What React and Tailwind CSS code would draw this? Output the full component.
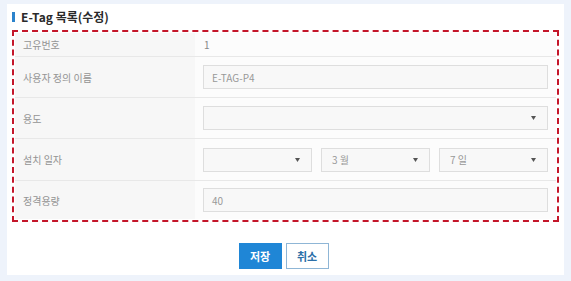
const font = { fontFamily: '"Noto Sans CJK KR", "Noto Sans", sans-serif' };

function Caret() {
  return (
    <svg width="5" height="4" viewBox="0 0 5 4">
      <path d="M0 0 L5 0 L2.5 4 Z" fill="#555" />
    </svg>
  );
}

function Select({ value, className }) {
  return (
    <div className={`h-[24px] border border-[#dedede] bg-[#f8f8f8] flex items-center justify-between pl-[10px] pr-[11px] ${className}`}>
      <span className="text-[10px] text-[#999]">{value}</span>
      <Caret />
    </div>
  );
}

function Row({ label, children, height = "h-[41px]", last }) {
  return (
    <div className={`flex ${height} ${last ? "" : "border-b border-[#e8e8e8]"}`}>
      <div className="w-[180px] bg-[#f7f7f7] flex items-center pl-[8px] text-[10px] text-[#949494]">{label}</div>
      <div className="flex-1 bg-[#fcfcfc] flex items-center pl-[8px] pr-[8px]">{children}</div>
    </div>
  );
}

export default function App() {
  return (
    <div className="w-[571px] h-[281px] bg-[#eef3fb] pt-[4px] pl-[7px]" style={font}>
      <div className="w-[557px] h-[271px] bg-white flex flex-col">
        <div className="h-[26px] flex items-center pl-[5px] pb-[1px]">
          <div className="w-[3px] h-[10px] bg-[#2b83cc]" />
          <span className="ml-[6px] text-[12px] font-bold text-[#2a2a2a]">E-Tag 목록(수정)</span>
        </div>
        <div className="ml-[5px] w-[547px] border-2 border-dashed border-[#c4162a] p-px">
          <Row label="고유번호" height="h-[24px]">
            <span className="text-[10px] text-[#888] pl-[1px]">1</span>
          </Row>
          <Row label="사용자 정의 이름">
            <div className="w-full h-[24px] border border-[#dedede] bg-[#f8f8f8] flex items-center pl-[8px] text-[10px] text-[#999]">E-TAG-P4</div>
          </Row>
          <Row label="용도">
            <Select value="" className="w-full" />
          </Row>
          <Row label="설치 일자" height="h-[42px]">
            <div className="w-full flex gap-[9px]">
              <Select value="" className="flex-1" />
              <Select value="3 월" className="flex-1" />
              <Select value="7 일" className="flex-1" />
            </div>
          </Row>
          <Row label="정격용량" height="h-[38px]" last>
            <div className="w-full h-[24px] border border-[#dedede] bg-[#f8f8f8] flex items-center pl-[8px] text-[10px] text-[#999]">40</div>
          </Row>
        </div>
        <div className="flex justify-center gap-[4px] mt-[21px] pr-[4px]">
          <button className="w-[43px] h-[26px] bg-[#1f86d6] text-white text-[11px] font-bold">저장</button>
          <button className="w-[43px] h-[26px] bg-white border border-[#8fb6d6] text-[#2c6fa8] text-[11px] font-bold">취소</button>
        </div>
      </div>
    </div>
  );
}
